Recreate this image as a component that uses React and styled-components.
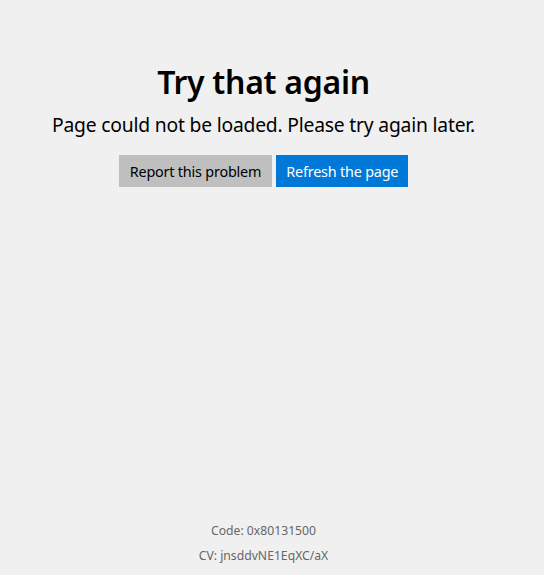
import React from 'react'
import styled, { createGlobalStyle } from 'styled-components';

const GlobalStyle = createGlobalStyle`
html, body {
    margin: 0;
    padding: 0;
    background-color: #f0f0f0;
    height: 100%;
}
#root {
    height: 100%;
}
`;

const App = () => {
    return (
        <>
            <GlobalStyle />
            <Page>
                <Content>
                    <Title>Try that again</Title>
                    <Message>Page could not be loaded. Please try again later.</Message>
                    <Actions>
                        <Button>Report this problem</Button>
                        <Button primary>Refresh the page</Button>
                    </Actions>
                </Content>
                <Footer>
                    <p>Code: 0x80131500</p>
                    <p>CV: jnsddvNE1EqXC/aX</p>
                </Footer>
            </Page>
        </>
    )
}

export default App;

const Page = styled.div`
width: 527px;
height: 575px;
display: flex;
flex-direction: column;
justify-content: space-between;
font-family: "Noto Sans", "Open Sans", sans-serif;
color: #000;
`;

const Content = styled.div`
display: flex;
flex-direction: column;
align-items: center;
padding-top: 61px;
`;

const Title = styled.h1`
margin: 0;
font-size: 32px;
font-weight: 600;
line-height: 42px;
letter-spacing: -0.3px;
`;

const Message = styled.p`
margin: 8px 0 0;
font-size: 19.3px;
line-height: 28px;
letter-spacing: -0.2px;
`;

const Actions = styled.div`
display: flex;
gap: 4px;
margin-top: 16px;
`;

const Button = styled.button`
height: 32px;
padding: 0 ${props => props.primary ? '10px' : '11px'};
border: none;
border-radius: 0;
font-family: inherit;
font-size: 14.4px;
letter-spacing: -0.2px;
color: ${props => props.primary ? '#fff' : '#000'};
background-color: ${props => props.primary ? '#0078d7' : '#bfbfbf'};
cursor: pointer;
`;

const Footer = styled.div`
display: flex;
flex-direction: column;
align-items: center;
gap: 7px;
padding-bottom: 10px;

p {
    margin: 0;
    font-size: 12.2px;
    line-height: 18px;
    color: #666;
}
`;
